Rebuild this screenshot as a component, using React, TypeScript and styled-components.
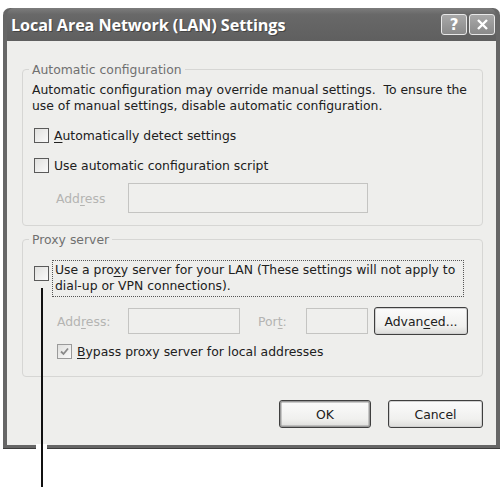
import React from "react";
import styled, { createGlobalStyle } from "styled-components";

const Global = createGlobalStyle`
  html, body { margin: 0; padding: 0; background: #ffffff; }
  body { font-family: "DejaVu Sans", "Liberation Sans", sans-serif; }
`;

const Page = styled.div`
  position: relative;
  width: 503px;
  height: 487px;
  padding: 8px 3px 0 3px;
  box-sizing: border-box;
  overflow: hidden;
`;

const Window = styled.div`
  display: flex;
  flex-direction: column;
  width: 497px;
  height: 441px;
  box-sizing: border-box;
  border-radius: 7px 7px 0 0;
  background: #666666;
  padding: 0 4px 4px 4px;
  box-shadow: inset 0 -1px 0 #3c3c3c;
`;

const TitleBar = styled.div`
  display: flex;
  align-items: center;
  justify-content: space-between;
  height: 33px;
  padding: 0 1px 0 4px;
  border-radius: 7px 7px 0 0;
  background: linear-gradient(#7c7c7c 0%, #686868 20%, #5f5f5f 100%);
`;

const Title = styled.div`
  color: #ffffff;
  font-family: "Open Sans", "DejaVu Sans", sans-serif;
  font-weight: 700;
  font-size: 16.2px;
  letter-spacing: -0.1px;
  text-shadow: 1px 1px 0 #444;
  padding-top: 1px;
`;

const Caps = styled.div`
  display: flex;
  gap: 2px;
`;

const CapButton = styled.div`
  width: 26px;
  height: 21px;
  box-sizing: border-box;
  border: 1px solid #e8e8e8;
  border-radius: 3px;
  background: linear-gradient(#a8a8a8, #8a8a8a);
  display: flex;
  align-items: center;
  justify-content: center;
  color: #ffffff;
  font-family: "DejaVu Sans", sans-serif;
  font-weight: 700;
  font-size: 15px;
`;

const Body = styled.div`
  flex: 1;
  display: flex;
  flex-direction: column;
  background: #eeeeec;
  padding: 21px 13px 0 15px;
  color: #202020;
  font-size: 12.4px;
`;

const Group = styled.fieldset<{ $h: number }>`
  margin: 0;
  padding: 0;
  height: ${(p) => p.$h}px;
  box-sizing: border-box;
  border: 1px solid #d6d6d4;
  border-radius: 4px;
  display: flex;
  flex-direction: column;
  min-width: 0;
`;

const Legend = styled.legend`
  margin-left: 6px;
  padding: 0 3px;
  color: #707070;
  font-size: 12.4px;
  line-height: 15px;
`;

const GroupInner = styled.div`
  display: flex;
  flex-direction: column;
  padding: 0 0 0 9px;
`;

const Paragraph = styled.div`
  line-height: 16px;
  margin-top: 5px;
`;

const Row = styled.div<{ $mt: number; $ml?: number }>`
  display: flex;
  align-items: center;
  margin-top: ${(p) => p.$mt}px;
  margin-left: ${(p) => p.$ml ?? 0}px;
`;

const Box = styled.div<{ $muted?: boolean }>`
  width: 13px;
  height: 13px;
  flex: none;
  border: 1px solid ${(p) => (p.$muted ? "#9a9a9a" : "#5a5a5a")};
  background: linear-gradient(135deg, #e0e0de, #fafafa);
  display: flex;
  align-items: center;
  justify-content: center;
`;

const Label = styled.span<{ $gap?: number }>`
  margin-left: ${(p) => p.$gap ?? 5}px;
  white-space: nowrap;
`;

const Muted = styled.span<{ $w: number }>`
  color: #b4b4b2;
  width: ${(p) => p.$w}px;
  flex: none;
  white-space: nowrap;
`;

const Field = styled.div<{ $w: number; $h: number }>`
  width: ${(p) => p.$w}px;
  height: ${(p) => p.$h}px;
  flex: none;
  box-sizing: border-box;
  border: 1px solid #c4c4c2;
  background: #efefed;
`;

const Focus = styled.div`
  width: 412px;
  box-sizing: border-box;
  border: 1px dotted #555;
  padding: 1px 2px 2px 2px;
  margin-left: 3px;
  line-height: 16px;
  white-space: nowrap;
`;

const Button = styled.div<{ $w: number; $h: number; $default?: boolean }>`
  width: ${(p) => p.$w}px;
  height: ${(p) => p.$h}px;
  box-sizing: border-box;
  flex: none;
  border: 1px solid #3f3f3f;
  border-radius: 3px;
  background: linear-gradient(#fbfbfb, #f0f0ee 70%, #dcdcda);
  box-shadow: ${(p) =>
    p.$default ? "inset 0 0 0 1.5px #9a9a9a" : "inset 0 0 0 1px #d0d0d0"};
  display: flex;
  align-items: center;
  justify-content: center;
  color: #202020;
`;

const Footer = styled.div`
  display: flex;
  justify-content: flex-end;
  gap: 17px;
  margin-top: 23px;
`;

/* Callout pointer running from the proxy checkbox off the bottom of the page */
const Pointer = styled.div`
  position: absolute;
  left: 41px;
  top: 288px;
  width: 2px;
  height: 199px;
  background: #111111;
`;

const PointerGap = styled.div`
  position: absolute;
  left: 36px;
  top: 444px;
  width: 11px;
  height: 6px;
  background: #ffffff;
`;

const U = styled.u`
  text-underline-offset: 2px;
`;

const Check = () => (
  <svg width="11" height="11" viewBox="0 0 11 11">
    <path d="M2 5.5 L4.5 8 L9 2.5" fill="none" stroke="#8a8a8a" strokeWidth="1.8" />
  </svg>
);

export default function App() {
  return (
    <>
      <Global />
      <Page>
        <Window>
          <TitleBar>
            <Title>Local Area Network (LAN) Settings</Title>
            <Caps>
              <CapButton>?</CapButton>
              <CapButton>
                <svg width="13" height="13" viewBox="0 0 13 13">
                  <path d="M2 2 L11 11 M11 2 L2 11" stroke="#fff" strokeWidth="2.4" />
                </svg>
              </CapButton>
            </Caps>
          </TitleBar>
          <Body>
            <Group $h={164}>
              <Legend>Automatic configuration</Legend>
              <GroupInner>
                <Paragraph>
                  Automatic configuration may override manual settings.&nbsp; To ensure the
                  <br />
                  use of manual settings, disable automatic configuration.
                </Paragraph>
                <Row $mt={14} $ml={2}>
                  <Box />
                  <Label>
                    <U>A</U>utomatically detect settings
                  </Label>
                </Row>
                <Row $mt={15} $ml={2}>
                  <Box />
                  <Label>Use automatic configuration script</Label>
                </Row>
                <Row $mt={10} $ml={24}>
                  <Muted $w={72}>
                    Add<U>r</U>ess
                  </Muted>
                  <Field $w={240} $h={30} />
                </Row>
              </GroupInner>
            </Group>
            <Group $h={145} style={{ marginTop: 6 }}>
              <Legend>Proxy server</Legend>
              <GroupInner>
                <Row $mt={13} $ml={2} style={{ alignItems: "flex-start" }}>
                  <Box style={{ marginTop: 6 }} />
                  <Focus>
                    Use a pro<U>x</U>y server for your LAN (These settings will not apply to
                    <br />
                    dial-up or VPN connections).
                  </Focus>
                </Row>
                <Row $mt={10} $ml={25}>
                  <Muted $w={71}>
                    Add<U>r</U>ess:
                  </Muted>
                  <Field $w={112} $h={26} />
                  <Muted $w={48} style={{ marginLeft: 18 }}>
                    Por<U>t</U>:
                  </Muted>
                  <Field $w={62} $h={26} />
                  <Button $w={94} $h={28} style={{ marginLeft: 6 }}>
                    Advan<U>c</U>ed...
                  </Button>
                </Row>
                <Row $mt={9} $ml={25}>
                  <Box $muted>
                    <Check />
                  </Box>
                  <Label $gap={5}>
                    <U>B</U>ypass proxy server for local addresses
                  </Label>
                </Row>
              </GroupInner>
            </Group>
            <Footer>
              <Button $w={92} $h={28} $default>
                OK
              </Button>
              <Button $w={95} $h={28}>
                Cancel
              </Button>
            </Footer>
          </Body>
        </Window>
        <PointerGap />
        <Pointer />
      </Page>
    </>
  );
}
